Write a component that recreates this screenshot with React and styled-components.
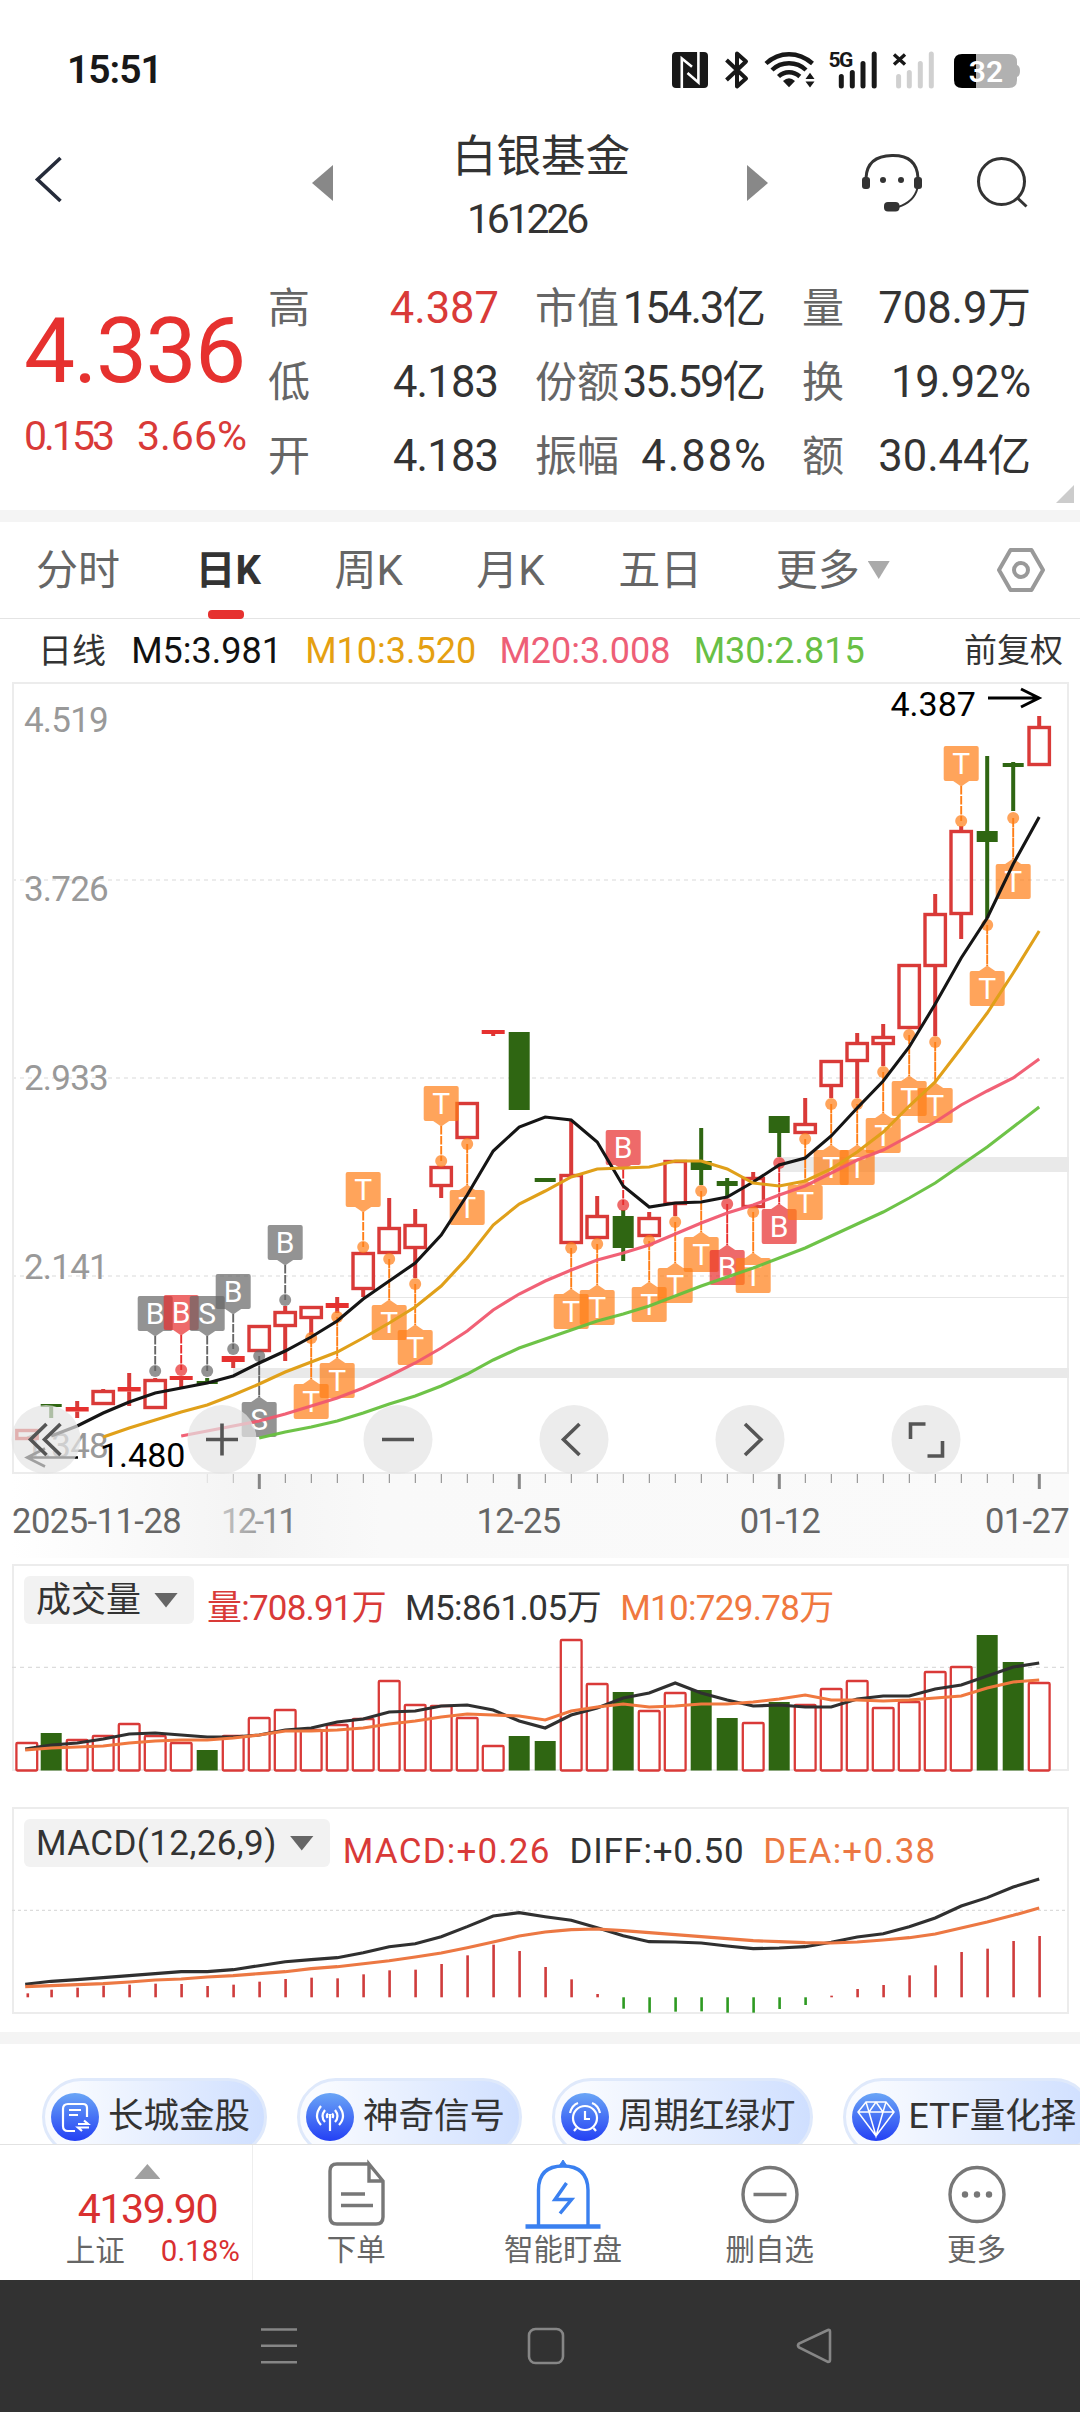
import React from 'react'
import styled, { createGlobalStyle } from 'styled-components'

// y positions of the moving averages, one point per trading day
const ma5 = [1444, 1436, 1426, 1413, 1402, 1393, 1388, 1383, 1376, 1363, 1351, 1337, 1321, 1299, 1281, 1263, 1235, 1195, 1151, 1127, 1117, 1120, 1142, 1186, 1207, 1203, 1202, 1197, 1182, 1165, 1158, 1136, 1108, 1081, 1047, 1004, 958, 918, 864, 817]
const ma10 = [1437, 1428, 1420, 1412, 1405, 1395, 1384, 1372, 1362, 1352, 1338, 1323, 1307, 1286, 1258, 1225, 1204, 1191, 1177, 1169, 1168, 1167, 1161, 1161, 1169, 1183, 1186, 1181, 1169, 1152, 1132, 1106, 1082, 1048, 1013, 973, 931]
const ma20 = [1436, 1431, 1426, 1421, 1414, 1406, 1398, 1388, 1376, 1363, 1348, 1331, 1310, 1294, 1281, 1270, 1260, 1253, 1245, 1234, 1223, 1213, 1205, 1195, 1186, 1173, 1160, 1150, 1136, 1122, 1105, 1091, 1078, 1059]
const ma30 = [1438, 1432, 1427, 1421, 1413, 1404, 1396, 1386, 1374, 1360, 1348, 1339, 1330, 1321, 1314, 1306, 1296, 1286, 1277, 1268, 1258, 1248, 1236, 1224, 1212, 1198, 1183, 1165, 1147, 1127, 1107]

// kind (u = up, d = down, f = flat), body top, body bottom, high, low
const candles = [
  ['u', 1429, 1440, 1429, 1440], ['d', 1404, 1407, 1404, 1418], ['f', 1407, 1411.5, 1401, 1418],
  ['u', 1390, 1405, 1389, 1405], ['f', 1387, 1391.5, 1373, 1406], ['u', 1379, 1409, 1378, 1409],
  ['f', 1376, 1380, 1376, 1387], ['d', 1381, 1384, 1378, 1384], ['f', 1356, 1362, 1356, 1368],
  ['u', 1325, 1352, 1325, 1352], ['u', 1311, 1327, 1306, 1361], ['u', 1306, 1319, 1306, 1335],
  ['f', 1303, 1308, 1297, 1313], ['u', 1252, 1290, 1252, 1297], ['u', 1227, 1254, 1198, 1254],
  ['u', 1224, 1249, 1209, 1278], ['u', 1166, 1187, 1166, 1198], ['u', 1102, 1139, 1102, 1139],
  ['f', 1030, 1034, 1030, 1036], ['d', 1032, 1110, 1032, 1110], ['d', 1178, 1182, 1178, 1182],
  ['u', 1174, 1244, 1120, 1244], ['u', 1215, 1239, 1196, 1239], ['d', 1216, 1248, 1210, 1261],
  ['u', 1217, 1237, 1212, 1237], ['u', 1160, 1205, 1160, 1216], ['d', 1161, 1170, 1128, 1185],
  ['d', 1181, 1186, 1178, 1197], ['u', 1177, 1208, 1172, 1208], ['d', 1116, 1133, 1116, 1157],
  ['u', 1123, 1134, 1098, 1134], ['u', 1060, 1087, 1060, 1098], ['u', 1042, 1062, 1033, 1098],
  ['u', 1036, 1045, 1024, 1066], ['u', 964, 1029, 964, 1029], ['u', 913, 967, 894, 1036],
  ['u', 830, 915, 826, 939], ['d', 831, 842, 756, 918], ['d', 763, 767, 762, 811],
  ['u', 726, 766, 716, 766],
]

// day index, letter, colour, box top, true when the box hangs above its dot
const marks = [
  [5, 'B', 'gray', 1296, true], [6, 'B', 'red', 1295, true], [7, 'S', 'gray', 1296, true],
  [8, 'B', 'gray', 1274, true], [9, 'S', 'gray', 1402], [10, 'B', 'gray', 1225, true],
  [11, 'T', 'orange', 1384], [12, 'T', 'orange', 1363], [13, 'T', 'orange', 1172, true],
  [14, 'T', 'orange', 1305], [15, 'T', 'orange', 1330], [16, 'T', 'orange', 1086, true],
  [17, 'T', 'orange', 1190], [21, 'T', 'orange', 1294], [22, 'T', 'orange', 1290],
  [23, 'B', 'red', 1130, true], [24, 'T', 'orange', 1287], [25, 'T', 'orange', 1268],
  [26, 'T', 'orange', 1237], [27, 'B', 'red', 1250], [28, 'T', 'orange', 1258],
  [29, 'B', 'red', 1209], [30, 'T', 'orange', 1185], [31, 'T', 'orange', 1150],
  [32, 'T', 'orange', 1150], [33, 'T', 'orange', 1118], [34, 'T', 'orange', 1081],
  [35, 'T', 'orange', 1088], [36, 'T', 'orange', 746, true], [37, 'T', 'orange', 971],
  [38, 'T', 'orange', 864],
]

const markColors = { gray: '#666666', red: '#e82c2c', orange: '#ff7e16' }

const volumes = [1742, 1733, 1739, 1735, 1723, 1735, 1742, 1750, 1735, 1717, 1709, 1729, 1724, 1718, 1680, 1704, 1705, 1717, 1745, 1736, 1741, 1639, 1683, 1692, 1710, 1692, 1690, 1718, 1722, 1702, 1704, 1688, 1680, 1707, 1701, 1671, 1666, 1635, 1662, 1682]
const downDays = [1, 7, 19, 20, 23, 26, 27, 29, 37, 38]
const vol5 = [1749, 1745, 1743, 1739, 1734, 1733, 1735, 1737, 1737, 1735, 1730, 1728, 1722, 1719, 1712, 1711, 1706, 1705, 1710, 1721, 1728, 1715, 1708, 1698, 1693, 1683, 1693, 1700, 1706, 1705, 1707, 1707, 1699, 1696, 1696, 1689, 1685, 1676, 1667, 1663]
const vol10 = [1750, 1748, 1747, 1746, 1743, 1741, 1740, 1740, 1738, 1735, 1731, 1731, 1730, 1728, 1724, 1721, 1717, 1714, 1715, 1716, 1720, 1711, 1707, 1704, 1707, 1706, 1704, 1704, 1702, 1699, 1695, 1700, 1700, 1701, 1700, 1698, 1696, 1688, 1682, 1680]

// thirds of a pixel, measured down from the top of the indicator
const macd = [580, 569, 563, 557, 554, 551, 552, 558, 554, 545, 537, 533, 535, 523, 511, 509, 492, 466, 434, 453, 501, 538, 582, 626, 638, 635, 634, 638, 638, 627, 615, 587, 567, 555, 526, 496, 456, 446, 423, 408]
const diff = [553, 544, 539, 533, 527, 521, 515, 515, 509, 497, 485, 479, 473, 458, 440, 431, 410, 380, 348, 338, 350, 361, 383, 407, 425, 426, 429, 438, 446, 444, 440, 427, 411, 401, 380, 354, 318, 293, 261, 237]
const dea = [560, 557, 554, 551, 546, 540, 537, 531, 527, 521, 515, 506, 500, 491, 482, 471, 459, 443, 426, 408, 396, 389, 387, 392, 398, 404, 410, 416, 422, 425, 428, 429, 426, 420, 413, 402, 384, 366, 346, 324]

const dayX = (i) => 25.2 + 26 * i
const third = (v) => 1800 + v / 3
const line = (ys, start = 0) => ys.map((y, i) => `${dayX(i + start)},${y}`).join(' ')

const RED = '#d93a38'
const GREEN = '#2f6612'

function Candle({ i, data }) {
  const [kind, top, bottom, high, low] = data
  const x = i === 0 ? 27 : dayX(i)
  const color = kind === 'd' ? GREEN : RED
  return (
    <g>
      {high < top && <rect x={x - 2} y={high} width="4" height={top - high} fill={color} />}
      {low > bottom && <rect x={x - 2} y={bottom} width="4" height={low - bottom} fill={color} />}
      {kind === 'u' ? (
        <rect x={x - 10.2} y={top + 1.5} width="20.4" height={bottom - top - 3} fill="none" stroke={RED} strokeWidth="3.4" />
      ) : (
        <rect x={x - (kind === 'd' ? 10.5 : 11.5)} y={top} width={kind === 'd' ? 21 : 23} height={bottom - top} fill={kind === 'd' ? GREEN : '#e6312f'} />
      )}
    </g>
  )
}

function Mark({ data }) {
  const [i, letter, tone, top, above] = data
  const x = dayX(i)
  const color = markColors[tone]
  const dot = above ? top + 75 : top - 46
  const tip = above
    ? `M${x - 8} ${top + 35}L${x} ${top + 40.5}L${x + 8} ${top + 35}Z`
    : `M${x - 8} ${top}L${x} ${top - 5.5}L${x + 8} ${top}Z`
  return (
    <g>
      <path d={above ? `M${x} ${top + 40}V${dot}` : `M${x} ${dot}V${top - 5}`} stroke={color} strokeWidth="1.9" strokeDasharray={above ? '8.5 1.5' : '9.4 .6'} />
      <g fill={color} opacity=".7">
        <circle cx={x} cy={dot} r="6" />
        <rect x={x - 17.5} y={top} width="35" height="35" rx="2" />
        <path d={tip} />
      </g>
      <MarkText x={x} y={top + 28.3}>{letter}</MarkText>
    </g>
  )
}

function KChart() {
  return (
    <ChartSvg viewBox="0 682 1080 876">
      <defs>
        <linearGradient id="axis">
          <stop offset="0" stopColor="#fff" />
          <stop offset=".22" stopColor="#f4f4f4" />
          <stop offset=".35" stopColor="#f9f9f9" />
          <stop offset="1" stopColor="#fafafa" />
        </linearGradient>
        <linearGradient id="fade">
          <stop offset="0" stopColor="#c4c4c4" />
          <stop offset="1" stopColor="#777" />
        </linearGradient>
      </defs>
      <rect x="12" y="1474" width="1057" height="84" fill="url(#axis)" />
      <rect x="13" y="683" width="1055" height="790" fill="#fff" stroke="#ececec" strokeWidth="2" />
      {[880, 1078, 1276].map((y) => (
        <path key={y} d={`M12 ${y}H1068`} stroke="#ececec" strokeWidth="2" strokeDasharray="4 4" />
      ))}
      <rect x="233" y="1368" width="836" height="10" fill="#e9e9e9" />
      <rect x="779" y="1157" width="290" height="15" fill="#e9e9e9" />
      <rect x="363" y="1297" width="706" height="1" fill="#e6e6e6" />

      <AxisText x="24" y="732">4.519</AxisText>
      <AxisText x="24" y="901">3.726</AxisText>
      <AxisText x="24" y="1090">2.933</AxisText>
      <AxisText x="24" y="1279">2.141</AxisText>
      <AxisText x="24" y="1458">1.348</AxisText>

      {candles.map((c, i) => <Candle key={i} i={i} data={c} />)}
      {marks.map((m) => <Mark key={m[0]} data={m} />)}

      <Line points={line(ma5.slice(1), 1)} stroke="#151515" />
      <Line points={line(ma10, 3)} stroke="#e0a01a" />
      <Line points={line(ma20, 6)} stroke="#f0596f" strokeOpacity=".95" />
      <Line points={line(ma30, 9)} stroke="#66c03e" strokeOpacity=".95" />

      <path d="M988 698H1038M1021 689L1039 698L1021 707" fill="none" stroke="#000" strokeWidth="3" />
      <PeakText x="890.5" y="716">4.387</PeakText>
      <path d="M78 1457.5H28M45 1448.5L27 1457.5L45 1466.5" fill="none" stroke="#000" strokeWidth="2.6" />
      <PeakText x="100" y="1467">1.480</PeakText>

      {candles.map((c, i) => {
        if (i < 7) return null
        const big = i % 10 === 9
        return (
          <rect
            key={i}
            x={dayX(i) - (big ? 1.4 : 0.4)}
            y="1474"
            width={big ? 3 : 1}
            height={big ? 15 : 9}
            fill="#868686"
            opacity={i === 7 ? 0.2 : i === 8 ? 0.5 : 1}
          />
        )
      })}
      <DateText x="12" y="1532.5" letterSpacing="-0.5">2025-11-28</DateText>
      <DateText x="258" y="1532.5" textAnchor="middle" letterSpacing="-2.6" fill="url(#fade)">12-11</DateText>
      <DateText x="518.5" y="1532.5" textAnchor="middle" letterSpacing="-0.6">12-25</DateText>
      <DateText x="779.5" y="1532.5" textAnchor="middle" letterSpacing="-1.5">01-12</DateText>
      <DateText x="1069" y="1532.5" textAnchor="end" letterSpacing="-0.6">01-27</DateText>
    </ChartSvg>
  )
}

function VolumeChart() {
  return (
    <PaneSvg viewBox="14 1624 1053 145">
      <path d="M12 1667.3H1067" stroke="#dcdcdc" strokeWidth="1.2" strokeDasharray="4 4" />
      {volumes.map((y, i) =>
        downDays.includes(i) ? (
          <rect key={i} x={dayX(i) - 10.5} y={y} width="21" height={1770.5 - y} fill={GREEN} />
        ) : (
          <rect key={i} x={(i ? dayX(i) : 26.8) - 10.4} y={y + 1} width="20.8" height={1769.5 - y} rx="1" fill="none" stroke={RED} strokeWidth="2.3" />
        )
      )}
      <Line points={line(vol5)} stroke="#303030" />
      <Line points={line(vol10)} stroke="#f0783f" />
    </PaneSvg>
  )
}

function MacdChart() {
  return (
    <PaneSvg viewBox="14 1867 1053 145">
      <path d="M12 1910.3H1067" stroke="#dcdcdc" strokeWidth="1.2" strokeDasharray="3 3" />
      {macd.map((v, i) => {
        const y = third(v)
        const up = y < 1997.3
        return (
          <rect
            key={i}
            x={i ? dayX(i) - 0.9 : 26.5}
            y={up ? y : 1997.3}
            width="2.6"
            height={Math.abs(1997.3 - y)}
            fill={up ? '#cf3c3c' : '#2e9a22'}
          />
        )
      })}
      <Line points={line(diff.map(third))} stroke="#303030" />
      <Line points={line(dea.map(third))} stroke="#ec7843" />
    </PaneSvg>
  )
}

function StatusIcons() {
  return (
    <>
      <StatusIcon $w={36} viewBox="672 50 36 40">
        <rect x="672" y="52" width="36" height="36" rx="4" fill="#181818" />
        <path d="M681.8 88V58.5L692 66.8M698.4 52V82.5L687.5 73" fill="none" stroke="#fff" strokeWidth="2.6" />
      </StatusIcon>
      <StatusIcon $w={28} $gap={14} viewBox="722 50 28 40">
        <path d="M726.5 60L746 78.5L737 86.5V53.5L746 61.5L726.5 80" fill="none" stroke="#181818" strokeWidth="4" strokeLinejoin="round" />
      </StatusIcon>
      <StatusIcon $w={54} $gap={13} viewBox="763 50 54 40">
        <g fill="none" stroke="#181818" strokeWidth="4.4">
          <path d="M766 63.5Q776 54.2 789 54.2T812.5 63.5" />
          <path d="M772 70Q779 63.3 789 63.3T806 70" />
          <path d="M778.5 76.5Q783 72.2 789 72.2T799.8 76.5" />
        </g>
        <path d="M783 81Q789 75.5 795 81L789 87.3ZM805.5 79L810 72.8L814.5 79ZM805.5 81.5L810 87.5L814.5 81.5Z" fill="#181818" />
      </StatusIcon>
      <StatusIcon $w={50} $gap={11} viewBox="828 50 50 40">
        <SignalText x="828.5" y="66.5">5G</SignalText>
        <path d="M841.3 76.5V86M852.3 72.5V86M863 63.5V86M874.2 54V86" stroke="#181818" strokeWidth="5" strokeLinecap="round" />
      </StatusIcon>
      <StatusIcon $w={46} $gap={12} viewBox="890 50 46 40">
        <path d="M894 54.5L905 64.5M905 54.5L894 64.5" stroke="#181818" strokeWidth="3.4" />
        <path d="M898.6 76.5V86M909.3 72.5V86M920.3 63.5V86M931.3 54V86" stroke="#d0d0d0" strokeWidth="5" strokeLinecap="round" />
      </StatusIcon>
      <StatusIcon $w={68} $gap={17} viewBox="953 50 68 40">
        <path d="M976 54H1009Q1017 54 1017 62V65Q1020 66 1020 71T1017 77V80Q1017 88 1009 88H976Z" fill="#b1b1b1" />
        <path d="M976 54H962Q954 54 954 62V80Q954 88 962 88H976Z" fill="#000" />
        <BatteryText x="986" y="82">32</BatteryText>
      </StatusIcon>
    </>
  )
}

const chips = [
  {
    name: '长城金股',
    icon: <path d="M36 24V15Q36 11 32 11H17Q12 11 12 16V33Q12 38 17 38H24M18 17H30M18 22H27M27 31H37L33 27.5M38 34.5H27L31 38" />,
  },
  {
    name: '神奇信号',
    icon: <path d="M24 24V38M24 21V24M19 29Q14 23.5 19 17M29 29Q34 23.5 29 17M15 32Q7 23.5 15 13M33 32Q41 23.5 33 13M21.5 25Q20 22.5 22 20.5M26.5 25Q28 22.5 26 20.5" />,
  },
  {
    name: '周期红绿灯',
    icon: <><circle cx="24" cy="25" r="12" /><path d="M24 18V26H29M9 20Q11 12 17 10M39 20Q37 12 31 10M15.5 35L13 38M32.5 35L35 38" /></>,
  },
  {
    name: 'ETF量化择',
    icon: <path d="M14 9H34L42 19L24 43L6 19ZM6 19H42M14 9L17 19L24 43L31 19L34 9M17 19L24 9L31 19" strokeWidth="1.5" />,
  },
]

const quoteRows = [
  [['高', '4.387', true, 0], ['市值', '154.3亿', false, -1.9], ['量', '708.9万', false, 0]],
  [['低', '4.183', false, -0.8], ['份额', '35.59亿', false, -1.9], ['换', '19.92%', false, -0.2]],
  [['开', '4.183', false, -0.8], ['振幅', '4.88%', false, 2], ['额', '30.44亿', false, 0]],
]

function App() {
  return (
    <Page>
      <Global />
      <StatusBar>
        <Time>15:51</Time>
        <StatusIcons />
      </StatusBar>

      <Header>
        <Icon $w={32} $h={50} $left={32} $top={-8} viewBox="32 154 32 50">
          <path d="M60.5 158L37.5 179.5L60.5 201" fill="none" stroke="#252b3a" strokeWidth="3.6" />
        </Icon>
        <Icon $w={21} $h={36} $left={248} viewBox="0 0 21 36"><path d="M21 0V36L0 18Z" fill="#888" /></Icon>
        <Title>
          <h1>白银基金</h1>
          <p>161226</p>
        </Title>
        <Icon $w={21} $h={36} $left={118} viewBox="0 0 21 36"><path d="M0 0V36L21 18Z" fill="#888" /></Icon>
        <Icon $w={62} $h={62} $left={93} viewBox="861 152 62 62">
          <path d="M866 178Q867 156 892 155.5T918 178" fill="none" stroke="#333" strokeWidth="3" />
          <path d="M917.5 188Q914 202 898 207" fill="none" stroke="#333" strokeWidth="2" />
          <rect x="862" y="177" width="8" height="12" rx="3" fill="#333" />
          <rect x="914" y="177" width="8" height="12" rx="3" fill="#333" />
          <circle cx="883" cy="180" r="3" fill="#333" />
          <circle cx="901" cy="180" r="3" fill="#333" />
          <rect x="884" y="202" width="15.5" height="9.5" rx="4" fill="#333" />
        </Icon>
        <Icon $w={54} $h={54} $left={52} viewBox="975 156 54 54">
          <circle cx="1001.5" cy="181.5" r="23" fill="none" stroke="#333" strokeWidth="3" />
          <path d="M1017.5 198L1026.5 206.5" stroke="#333" strokeWidth="3" />
        </Icon>
      </Header>

      <Quote>
        <PriceBox>
          <Price>4.336</Price>
          <Change>
            <Num $ls={-3}>0.153</Num>
            <Num>3.66%</Num>
          </Change>
        </PriceBox>
        <Stats>
          {quoteRows.flat().map(([label, value, up, ls]) => (
            <Stat key={label}>
              <span>{label}</span>
              <StatValue $up={up} $ls={ls}>{value}</StatValue>
            </Stat>
          ))}
        </Stats>
        <Corner />
      </Quote>
      <Band />

      <Tabs>
        <Tab>分时</Tab>
        <Tab $active>日K</Tab>
        <Tab>周K</Tab>
        <Tab>月K</Tab>
        <Tab>五日</Tab>
        <Tab>更多<Arrow $w={22} $h={18} $color="#aaa" /></Tab>
        <Icon $w={50} $h={48} viewBox="996 545.5 50 48">
          <path d="M1010.5 549.5H1031.5L1043 569.5L1031.5 589.5H1010.5L999 569.5Z" fill="none" stroke="#999" strokeWidth="4" strokeLinejoin="round" />
          <circle cx="1021" cy="569.5" r="7" fill="none" stroke="#999" strokeWidth="4" />
        </Icon>
      </Tabs>

      <MaRow>
        <MaLabel>日线</MaLabel>
        <Ma $color="#111">M5:3.981</Ma>
        <Ma $color="#e5a011">M10:3.520</Ma>
        <Ma $color="#ee5f77">M20:3.008</Ma>
        <Ma $color="#68c045">M30:2.815</Ma>
        <Adjust>前复权</Adjust>
      </MaRow>

      <ChartBox>
        <KChart />
        <Controls>
          <Round><svg viewBox="0 0 69 69"><path d="M35 19L19 34.5L35 50M49 19L33 34.5L49 50" /></svg></Round>
          <Round><svg viewBox="0 0 69 69"><path d="M18.5 34.5H50.5M34.5 18.5V50.5" /></svg></Round>
          <Round><svg viewBox="0 0 69 69"><path d="M18.5 34.5H50.5" /></svg></Round>
          <Round><svg viewBox="0 0 69 69"><path d="M40 19L24 34.5L40 50" /></svg></Round>
          <Round><svg viewBox="0 0 69 69"><path d="M29.5 19L45.5 34.5L29.5 50" /></svg></Round>
          <Round><svg viewBox="0 0 69 69"><path d="M19 34V19H34M51 36V51H36" /></svg></Round>
        </Controls>
      </ChartBox>

      <Pane>
        <PaneHead $gap={13}>
          <Select>成交量<Arrow $w={24} $h={15} $color="#666" /></Select>
          <Legend>
            <Value $color={RED} $ls={-0.8}>量:708.91万</Value>
            <Value $color="#333" $ls={-0.5}>M5:861.05万</Value>
            <Value $color="#f0783f" $ls={-0.7}>M10:729.78万</Value>
          </Legend>
        </PaneHead>
        <VolumeChart />
      </Pane>

      <Pane $top={36}>
        <PaneHead $gap={13}>
          <Select $ls={0.4}>MACD(12,26,9)<Arrow $w={24} $h={15} $color="#666" /></Select>
          <Legend>
            <Value $color={RED} $ls={1.2}>MACD:+0.26</Value>
            <Value $color="#333" $ls={0.7}>DIFF:+0.50</Value>
            <Value $color="#ec7843" $ls={1.2}>DEA:+0.38</Value>
          </Legend>
        </PaneHead>
        <MacdChart />
      </Pane>

      <Band $top={18} />
      <Chips>
        {chips.map((c) => (
          <Chip key={c.name}>
            <ChipIcon><svg viewBox="0 0 48 48">{c.icon}</svg></ChipIcon>
            <span>{c.name}</span>
          </Chip>
        ))}
      </Chips>

      <Nav>
        <Index>
          <Arrow $w={26} $h={15} $color="#a0a0a0" $up />
          <IndexValue>4139.90</IndexValue>
          <IndexRow>
            <span>上证</span>
            <b>0.18%</b>
          </IndexRow>
        </Index>
        <NavItem>
          <NavIcon $w={62} viewBox="325 2159 62 70">
            <path d="M369 2164H337Q330 2164 330 2171V2217Q330 2224 337 2224H376Q383 2224 383 2217V2181L369 2164V2181H383M341 2194H365M341 2205.5H373" />
          </NavIcon>
          下单
        </NavItem>
        <NavItem>
          <NavIcon $w={76} $color="#3a80f0" viewBox="525.5 2159 76 70">
            <path d="M539 2226V2190Q539 2166 563.5 2166T588.5 2190V2226" />
            <path d="M526 2226.5H601" strokeWidth="4.5" />
            <path d="M559.5 2166L563.5 2160L567.5 2166Z" fill="#3a80f0" strokeWidth="1" />
            <path d="M567 2183L555.5 2199.5H572L560.5 2213.5" strokeWidth="3.5" />
          </NavIcon>
          智能盯盘
        </NavItem>
        <NavItem>
          <NavIcon $w={62} viewBox="739.5 2159 62 70">
            <circle cx="770.5" cy="2194.500" r="27" />
            <path d="M754 2194.5H787" />
          </NavIcon>
          删自选
        </NavItem>
        <NavItem>
          <NavIcon $w={62} viewBox="946.5 2159 62 70">
            <circle cx="977.5" cy="2194.5" r="27" />
            <g fill="#777" stroke="none">
              <circle cx="965.5" cy="2194.5" r="3.2" />
              <circle cx="977.5" cy="2194.5" r="3.2" />
              <circle cx="989.5" cy="2194.5" r="3.2" />
            </g>
          </NavIcon>
          更多
        </NavItem>
      </Nav>

      <SystemBar>
        <svg width="36" height="38" viewBox="261 2327 36 38"><path d="M261 2329.5H297M261 2345.7H297M261 2362.3H297" /></svg>
        <svg width="38" height="38" viewBox="528 2327 38 38"><rect x="530" y="2329" width="34" height="34" rx="6.5" /></svg>
        <svg width="38" height="38" viewBox="794 2327 38 38"><path d="M827 2330L798 2343.5Q796 2345.5 798 2347.5L827 2362Q829 2362 829 2360V2331.5Q829 2329.5 827 2330Z" /></svg>
      </SystemBar>
    </Page>
  )
}

export default App

const Global = createGlobalStyle`
    *{
        box-sizing: border-box;
    }

    body{
        margin: 0;
        background-color: #fff;
    }

    h1, p{
        margin: 0;
        font-weight: 400;
    }

    svg{
        display: block;
        flex-shrink: 0;
    }
`

const Page = styled.div`
    width: 1080px;
    height: 2412px;
    overflow: hidden;
    display: flex;
    flex-direction: column;
    background-color: #fff;
    color: #333;
    font-family: Roboto, 'Noto Sans CJK SC', sans-serif;
    white-space: nowrap;
`

const StatusBar = styled.div`
    height: 124px;
    padding: 16px 59px 0 67px;
    display: flex;
    align-items: center;
    flex-shrink: 0;
`

const Time = styled.div`
    flex: 1;
    font-size: 39px;
    font-weight: 600;
    line-height: 40px;
    letter-spacing: -1px;
    color: #181818;
`

const StatusIcon = styled.svg`
    width: ${(p) => p.$w}px;
    height: 40px;
    margin-left: ${(p) => p.$gap || 0}px;
    overflow: visible;
`

const SignalText = styled.text`
    font-size: 21px;
    font-weight: 700;
    letter-spacing: -1.5px;
    fill: #181818;
`

const BatteryText = styled.text`
    font-size: 30px;
    font-weight: 600;
    text-anchor: middle;
    fill: #fff;
`

const Icon = styled.svg`
    width: ${(p) => p.$w}px;
    height: ${(p) => p.$h}px;
    margin-left: ${(p) => p.$left || 0}px;
    margin-top: ${(p) => p.$top || 0}px;
`

const Header = styled.div`
    height: 126px;
    padding-bottom: 8px;
    display: flex;
    align-items: center;
    flex-shrink: 0;
`

const Title = styled.div`
    width: 178px;
    margin-left: 119px;
    margin-right: -1px;
    padding-top: 11px;

    h1{
        font-size: 44.5px;
        line-height: 62px;
    }

    p{
        margin-left: 15px;
        font-size: 41px;
        line-height: 63px;
        letter-spacing: -3.2px;
    }
`

const Quote = styled.div`
    position: relative;
    height: 260px;
    padding-top: 22px;
    display: flex;
    flex-shrink: 0;
`

const PriceBox = styled.div`
    width: 268px;
    padding: 19px 0 0 24px;
    color: #e6312f;
`

const Price = styled.div`
    font-size: 91px;
    font-weight: 450;
    line-height: 121px;
    letter-spacing: -1.6px;
`

const Change = styled.div`
    display: flex;
    gap: 25px;
    font-size: 41px;
    line-height: 49px;
    color: #d93a38;
`

const Num = styled.span`
    letter-spacing: ${(p) => p.$ls || 0}px;
`

const Stats = styled.div`
    display: grid;
    grid-template-columns: 231px 231px 229px;
    grid-auto-rows: 74px;
    column-gap: 36px;
    align-content: start;
`

const Stat = styled.div`
    display: flex;
    justify-content: space-between;
    font-size: 42px;
    line-height: 74px;
    color: #666;
`

const StatValue = styled.span`
    font-size: 43.5px;
    letter-spacing: ${(p) => p.$ls}px;
    margin-right: ${(p) => -p.$ls}px;
    color: ${(p) => (p.$up ? '#d93a38' : '#333')};
`

const Corner = styled.div`
    position: absolute;
    right: 6px;
    bottom: 7px;
    border-left: 18px solid transparent;
    border-bottom: 18px solid #ccc;
`

const Band = styled.div`
    height: 12px;
    margin-top: ${(p) => p.$top || 0}px;
    flex-shrink: 0;
    background-color: #f4f4f4;
`

const Tabs = styled.div`
    height: 97px;
    padding-left: 36px;
    padding-right: 34px;
    display: flex;
    align-items: center;
    gap: 73.5px;
    flex-shrink: 0;
    border-bottom: 1px solid #e4e4e4;

    > svg{
        margin-left: auto;
    }
`

const Tab = styled.div`
    position: relative;
    display: flex;
    align-items: center;
    gap: 8px;
    font-size: ${(p) => (p.$active ? 40 : 42)}px;
    font-weight: ${(p) => (p.$active ? 700 : 400)};
    line-height: 97px;
    margin-left: ${(p) => (p.$active ? 2 : 0)}px;
    color: ${(p) => (p.$active ? '#333' : '#666')};

    &::after{
        content: '';
        display: ${(p) => (p.$active ? 'block' : 'none')};
        position: absolute;
        left: 12px;
        bottom: 0;
        width: 36px;
        height: 9px;
        border-radius: 4px;
        background-color: #e6312f;
    }
`

const Arrow = styled.i`
    width: ${(p) => p.$w}px;
    height: ${(p) => p.$h}px;
    background-color: ${(p) => p.$color};
    clip-path: ${(p) => (p.$up ? 'polygon(50% 0, 100% 100%, 0 100%)' : 'polygon(0 0, 100% 0, 50% 100%)')};
`

const MaRow = styled.div`
    height: 63px;
    padding: 1px 17px 0 38px;
    display: flex;
    align-items: center;
    gap: 23.2px;
    flex-shrink: 0;
    line-height: 62px;
`

const MaLabel = styled.span`
    margin-right: 2px;
    font-size: 34px;
`

const Ma = styled.span`
    font-size: 36px;
    color: ${(p) => p.$color};
`

const Adjust = styled.span`
    margin-left: auto;
    font-size: 33px;
`

const ChartBox = styled.div`
    position: relative;
    height: 876px;
    margin-bottom: 6px;
    flex-shrink: 0;
`

const ChartSvg = styled.svg`
    width: 1080px;
    height: 876px;
`

const Line = styled.polyline`
    fill: none;
    stroke-width: 3.1px;
`

const MarkText = styled.text`
    font-size: 30px;
    text-anchor: middle;
    fill: #fff;
`

const AxisText = styled.text`
    font-size: 35px;
    letter-spacing: -0.8px;
    fill: #999;
`

const PeakText = styled.text`
    font-size: 34px;
    fill: #000;
`

const DateText = styled.text`
    font-size: 34.5px;
    fill: ${(p) => p.fill || '#666'};
`

const Controls = styled.div`
    position: absolute;
    left: 12px;
    top: 723px;
    display: flex;
    gap: 107px;
    transform: translateX(-0.5px);
`

const Round = styled.div`
    width: 69px;
    height: 69px;
    border-radius: 50%;
    background-color: rgba(228, 228, 228, 0.7);

    path{
        fill: none;
        stroke: #555;
        stroke-width: 3.6px;
    }
`

const Pane = styled.div`
    width: 1057px;
    height: 207px;
    margin-left: 12px;
    margin-top: ${(p) => p.$top || 0}px;
    padding-top: 10px;
    flex-shrink: 0;
    border: 2px solid #ececec;
`

const PaneHead = styled.div`
    height: 48px;
    padding-left: 10px;
    display: flex;
    gap: ${(p) => p.$gap}px;
`

const Select = styled.div`
    height: 48px;
    padding: 0 16px 0 12px;
    display: flex;
    align-items: center;
    gap: 13px;
    border-radius: 6px;
    background-color: #f2f2f2;
    font-size: 35px;
    letter-spacing: ${(p) => p.$ls || 0}px;
    line-height: 51px;
`

const Legend = styled.div`
    padding-top: 9px;
    display: flex;
    gap: 19px;
    font-size: 35px;
    line-height: 48px;
`

const Value = styled.span`
    color: ${(p) => p.$color};
    letter-spacing: ${(p) => p.$ls}px;
`

const PaneSvg = styled.svg`
    width: 1053px;
    height: 145px;
    overflow: visible;
`

const Chips = styled.div`
    height: 100px;
    padding: 34px 0 0 42px;
    display: flex;
    gap: 30px;
    flex-shrink: 0;
    overflow: hidden;
`

const Chip = styled.div`
    height: 78px;
    padding: 0 14px 0 6px;
    display: flex;
    align-items: center;
    gap: 9px;
    flex-shrink: 0;
    border: 3px solid #dfe9fb;
    border-radius: 39px;
    background: linear-gradient(90deg, #f9fbff 10%, #cfdfff 100%);
    font-size: 35.5px;
    line-height: 48px;

    span{
        padding-bottom: 3px;
    }
`

const ChipIcon = styled.div`
    width: 48px;
    height: 48px;
    border-radius: 50%;
    background: linear-gradient(180deg, #6aa5f6, #2440f4);

    svg{
        fill: none;
        stroke: #fff;
        stroke-width: 2.2px;
    }
`

const Nav = styled.div`
    height: 136px;
    display: flex;
    flex-shrink: 0;
    border-top: 1px solid #e2e2e2;
`

const Index = styled.div`
    width: 253px;
    padding: 19px 0 0 43px;
    display: flex;
    flex-direction: column;
    align-items: center;
    border-right: 1px solid #eee;
`

const IndexValue = styled.div`
    margin-top: 8px;
    font-size: 41px;
    line-height: 44px;
    letter-spacing: -1.4px;
    color: #d93030;
`

const IndexRow = styled.div`
    display: flex;
    gap: 36px;
    margin-left: 11px;
    font-size: 29.5px;
    line-height: 40px;
    color: #666;

    b{
        font-weight: 400;
        color: #d93030;
    }
`

const NavItem = styled.div`
    width: 207px;
    padding-top: 14px;
    display: flex;
    flex-direction: column;
    align-items: center;
    font-size: 29.5px;
    line-height: 43px;
    color: #666;
`

const NavIcon = styled.svg`
    width: ${(p) => p.$w}px;
    height: 70px;
    fill: none;
    stroke: ${(p) => p.$color || '#777'};
    stroke-width: 3.4px;
`

const SystemBar = styled.div`
    height: 132px;
    padding-left: 261px;
    display: flex;
    align-items: center;
    gap: 230px;
    flex-shrink: 0;
    background-color: #323232;

    svg{
        fill: none;
        stroke: #868686;
        stroke-width: 2.6px;
    }
`
